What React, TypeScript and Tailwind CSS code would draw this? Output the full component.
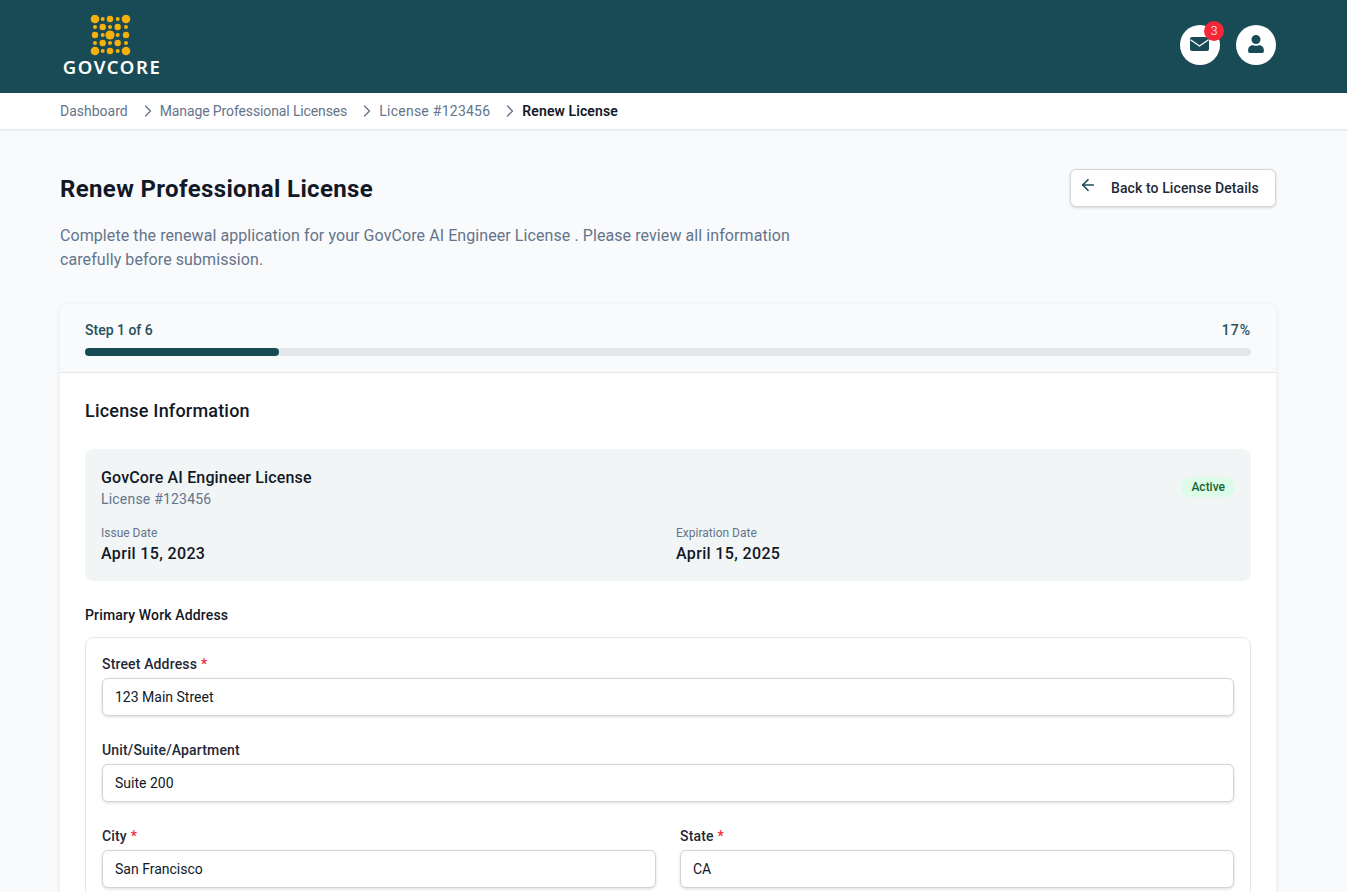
import { ArrowLeft, ChevronRight } from 'lucide-react'
import { FaUser } from 'react-icons/fa'

const LOGO_XS = [5, 12.7, 20, 27.7, 36]
const LOGO_YS = [4, 12, 20, 28, 36]
const LOGO_RADII = [
  [4.3, 2, 3.2, 2, 4.3],
  [2, 3.2, 2, 3.2, 2],
  [3.2, 2, 4.6, 2, 3.2],
  [2, 3.2, 2, 3.2, 2],
  [4.3, 2, 3.2, 2, 4.3],
]

function Logo() {
  return (
    <div className="flex w-[100px] flex-col items-center">
      <svg width="41" height="41" viewBox="0 0 41 41" className="mt-[-1px]">
        {LOGO_RADII.map((row, y) =>
          row.map((r, x) => <circle key={`${x}-${y}`} cx={LOGO_XS[x]} cy={LOGO_YS[y]} r={r} fill="#f5b00b" />),
        )}
      </svg>
      <span className="mt-[1px] ml-1 font-['Noto_Sans',sans-serif] text-[18.5px] leading-[20px] font-semibold tracking-[1.6px] text-white">
        GOVCORE
      </span>
    </div>
  )
}

function Crumbs() {
  return (
    <nav className="flex h-[37px] items-center border-b border-[#e5e7eb] bg-white px-[60px] text-sm text-[#64748b] shadow-[0_1px_2px_rgba(0,0,0,0.05)]">
      <span>Dashboard</span>
      <ChevronRight className="mr-[2px] ml-[10px] h-5 w-5" strokeWidth={1.5} />
      <span className="tracking-[-0.12px]">Manage Professional Licenses</span>
      <ChevronRight className="mr-[2px] ml-[10px] h-5 w-5" strokeWidth={1.5} />
      <span className="tracking-[0.25px]">License #123456</span>
      <ChevronRight className="mr-[2px] ml-[10px] h-5 w-5" strokeWidth={1.5} />
      <span className="font-semibold tracking-[0.1px] text-[#111827]">Renew License</span>
    </nav>
  )
}

function Field({ label, value, required }: { label: string; value: string; required?: boolean }) {
  return (
    <div>
      <label className="mb-1 block text-sm leading-[20px] font-medium tracking-[0.15px] text-[#1f2937]">
        {label}
        {required && <span className="ml-1 text-[#ef2b3d]">*</span>}
      </label>
      <input
        readOnly
        value={value}
        className="block h-[38px] w-full rounded-md border border-[#d1d5db] bg-white px-3 text-sm text-[#111827] shadow-[0_1px_3px_rgba(0,0,0,0.15)] outline-none"
      />
    </div>
  )
}

export default function App() {
  return (
    <div className="h-screen overflow-hidden bg-[#f9fafb] font-['Roboto',sans-serif] text-[#111827]">
      <header className="flex h-[93px] items-center justify-between bg-[#194b57] pr-[71px] pl-[60px]">
        <Logo />
        <div className="mb-1 flex items-center gap-4">
          <div className="relative flex h-10 w-10 items-center justify-center rounded-full bg-white text-[#194b57]">
            <svg width="19" height="14" viewBox="0 0 19 14" className="mr-[1px] mb-[2px]">
              <rect width="19" height="14" rx="2" fill="currentColor" />
              <path d="M0.5 2.8 L9.5 9 L18.5 2.8" fill="none" stroke="#fff" strokeWidth="1.2" />
            </svg>
            <span className="absolute top-[-4px] right-[-4px] flex h-5 w-5 items-center justify-center rounded-full bg-[#f62639] text-xs font-light text-white">
              3
            </span>
          </div>
          <div className="flex h-10 w-10 items-center justify-center rounded-full bg-white text-[#194b57]">
            <FaUser className="mb-[2px] h-[18px] w-[18px]" />
          </div>
        </div>
      </header>
      <Crumbs />

      <main className="pt-[39px] pr-[71px] pl-[60px]">
        <div className="flex items-start justify-between">
          <div>
            <h1 className="pt-[2px] text-2xl leading-[36px] font-bold tracking-[0.36px]">Renew Professional License</h1>
            <p className="mt-[17px] max-w-[768px] text-base leading-[24px] tracking-[0.08px] text-[#64748b]">
              Complete the renewal application for your GovCore AI Engineer License . Please review all information
              carefully before submission.
            </p>
          </div>
          <button className="flex h-[38px] w-[206px] items-center rounded-md border border-[#d1d5db] bg-white pl-[8px] text-sm font-medium tracking-[0.1px] text-[#1f2937] shadow-[0_1px_3px_rgba(0,0,0,0.15)]">
            <ArrowLeft className="mt-[-6px] mr-[14px] h-[18px] w-[18px] text-[#194b57]" strokeWidth={2.25} />
            Back to License Details
          </button>
        </div>

        <section className="mt-[32px] rounded-lg bg-white shadow-[0_1px_6px_rgba(0,0,0,0.08)]">
          <div className="rounded-t-lg border-b border-[#e5e7eb] bg-[#f9fafb] px-[25px] pt-4 pb-4">
            <div className="flex justify-between text-sm leading-[20px] font-medium text-[#24505c]">
              <span>Step 1 of 6</span>
              <span className="tracking-[1px]">17%</span>
            </div>
            <div className="mt-2 h-2 rounded-full bg-[#e5e7eb]">
              <div className="h-2 w-[194px] rounded-full bg-[#194b57]" />
            </div>
          </div>

          <div className="px-[25px] pt-6">
            <h2 className="text-lg leading-[28px] font-medium tracking-[0.2px]">License Information</h2>

            <div className="mt-6 rounded-lg bg-[#f1f5f6] px-4 pt-4 pb-4">
              <div className="flex items-center justify-between">
                <div>
                  <div className="mt-[1px] mb-[-1px] text-base leading-[24px] font-medium tracking-[0.15px]">
                    GovCore AI Engineer License
                  </div>
                  <div className="text-sm leading-[20px] tracking-[0.2px] text-[#64748b]">License #123456</div>
                </div>
                <span className="rounded-full bg-[#dcfce7] px-[10px] py-[2px] text-xs leading-[16px] font-medium text-[#166534]">
                  Active
                </span>
              </div>
              <div className="mt-4 grid grid-cols-2 gap-4">
                <div>
                  <div className="text-xs leading-[16px] text-[#64748b]">Issue Date</div>
                  <div className="mt-[1px] mb-[-1px] text-base leading-[24px] font-medium tracking-[0.35px]">
                    April 15, 2023
                  </div>
                </div>
                <div>
                  <div className="text-xs leading-[16px] text-[#64748b]">Expiration Date</div>
                  <div className="mt-[1px] mb-[-1px] text-base leading-[24px] font-medium tracking-[0.35px]">
                    April 15, 2025
                  </div>
                </div>
              </div>
            </div>

            <h3 className="mt-6 text-sm leading-[20px] font-medium tracking-[0.15px]">Primary Work Address</h3>
            <div className="mt-3 rounded-lg border border-[#e5e7eb] px-4 pt-4 pb-6">
              <div className="flex flex-col gap-6">
                <Field label="Street Address" value="123 Main Street" required />
                <Field label="Unit/Suite/Apartment" value="Suite 200" />
                <div className="grid grid-cols-2 gap-6">
                  <Field label="City" value="San Francisco" required />
                  <Field label="State" value="CA" required />
                </div>
              </div>
            </div>
          </div>
        </section>
      </main>
    </div>
  )
}
